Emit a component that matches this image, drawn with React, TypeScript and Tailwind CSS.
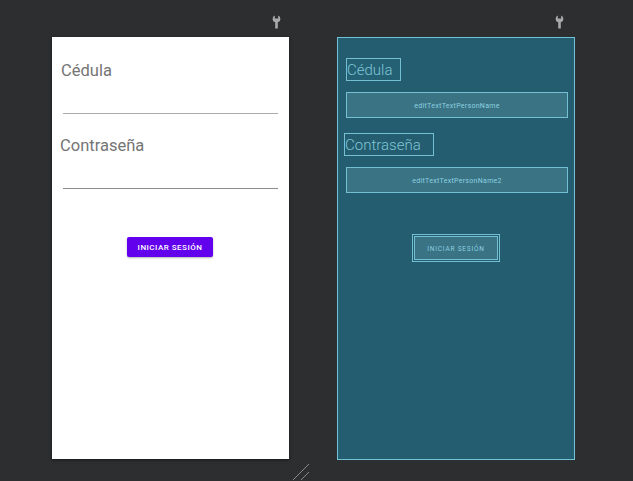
import React from 'react';

function Wrench() {
  return (
    <svg width="9" height="14" viewBox="0 0 9 14" className="block">
      <path
        d="M2.8 0.6 Q0.6 1.4 0.6 4.2 Q0.6 6.6 3.2 7.3 L3.2 13.4 L5.8 13.4 L5.8 7.3 Q8.4 6.6 8.4 4.2 Q8.4 1.4 6.2 0.6 L6.2 3.4 L2.8 3.4 Z"
        fill="#a9a9a9"
      />
    </svg>
  );
}

function ResizeMarks() {
  return (
    <svg width="20" height="20" viewBox="0 0 20 20" className="block">
      <line x1="1" y1="19" x2="17" y2="3" stroke="#8a8a8a" strokeWidth="1" />
      <line x1="9" y1="19" x2="17" y2="11" stroke="#8a8a8a" strokeWidth="1" />
    </svg>
  );
}

function DesignPanel() {
  return (
    <div className="relative h-[422px] w-[237px] bg-white shadow-[0_1px_3px_rgba(0,0,0,0.5)]">
      <div className="absolute -top-[22px] right-[8px]">
        <Wrench />
      </div>
      <div className="flex flex-col pt-[21px]">
        <div className="ml-[9px] h-[23px] pt-[1px] text-[16.5px] leading-[23px] text-[#747474]">Cédula</div>
        <div className="ml-[11px] mt-[11px] h-[22px] w-[215px] border-b border-[#ababab]" />
        <div className="mt-[19px] ml-[8px] h-[23px] pt-[1px] text-[16.5px] leading-[23px] text-[#747474]">Contraseña</div>
        <div className="ml-[11px] mt-[11px] h-[22px] w-[215px] border-b border-[#8c8c8c]" />
        <div className="mt-[48px] flex justify-center pr-[1px]">
          <div className="flex h-[20px] w-[86px] items-center justify-center rounded-[2px] bg-[#6200ee] pt-[1px] text-[8px] font-medium tracking-[0.5px] text-white shadow-[0_1px_2px_rgba(0,0,0,0.3)]">
            INICIAR SESIÓN
          </div>
        </div>
      </div>
    </div>
  );
}

function BlueprintPanel() {
  return (
    <div className="relative h-[423px] w-[238px] border border-[#72c2d5] bg-[#235d6f]">
      <div className="absolute -top-[23px] right-[10px]">
        <Wrench />
      </div>
      <div className="flex flex-col pt-[20px]">
        <div className="ml-[8px] h-[23px] w-[55px] border border-[#74bfd2] bg-[#28657a]/50 pt-[1px] text-[15px] font-light leading-[21px] text-[#7fc6d7]">
          Cédula
        </div>
        <div className="ml-[8px] mt-[11px] flex h-[26px] w-[222px] items-center justify-center border border-[#74bfd2] bg-[#397384] pt-[2px] text-[7px] tracking-[0.3px] text-[#8ed0e0]">
          editTextTextPersonName
        </div>
        <div className="ml-[6px] mt-[15px] h-[23px] w-[90px] border border-[#74bfd2] pt-[1px] text-[15px] font-light leading-[21px] text-[#7fc6d7]">
          Contraseña
        </div>
        <div className="ml-[8px] mt-[11px] flex h-[26px] w-[222px] items-center justify-center border border-[#74bfd2] bg-[#397384] pt-[2px] text-[7px] tracking-[0.3px] text-[#8ed0e0]">
          editTextTextPersonName2
        </div>
        <div className="mt-[41px] flex justify-center">
          <div className="flex h-[28px] w-[88px] items-center justify-center border border-[#74bfd2] p-[1px]">
            <div className="flex h-full w-full items-center justify-center border border-[#74bfd2] bg-[#397384] pt-[3px] text-[6.5px] tracking-[0.8px] text-[#8ed0e0]">
              INICIAR SESIÓN
            </div>
          </div>
        </div>
      </div>
    </div>
  );
}

export default function App() {
  return (
    <div
      className="relative h-[481px] w-[633px] overflow-hidden bg-[#2d2e30]"
      style={{ fontFamily: 'Roboto, "Noto Sans", sans-serif' }}
    >
      <div className="flex items-start gap-[48px] pl-[52px] pt-[37px]">
        <DesignPanel />
        <BlueprintPanel />
      </div>
      <div className="absolute left-[292px] top-[461px]">
        <ResizeMarks />
      </div>
    </div>
  );
}
